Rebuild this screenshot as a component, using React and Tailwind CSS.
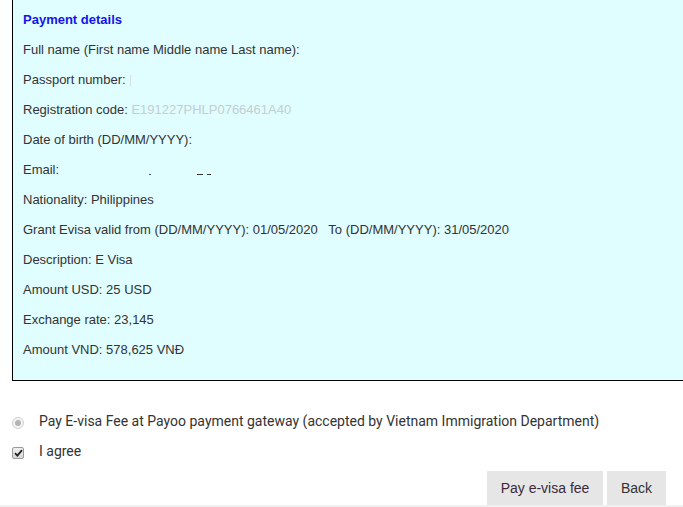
import React from "react";

const rows = [
  "Full name (First name Middle name Last name):",
  "passport",
  "registration",
  "Date of birth (DD/MM/YYYY):",
  "email",
  "Nationality: Philippines",
  "Grant Evisa valid from (DD/MM/YYYY): 01/05/2020   To (DD/MM/YYYY): 31/05/2020",
  "Description: E Visa",
  "Amount USD: 25 USD",
  "Exchange rate: 23,145",
  "Amount VND: 578,625 VNĐ",
];

function Row({ text }) {
  if (text === "passport") {
    return (
      <div className="flex items-center">
        Passport number:
        <span className="ml-[4px] inline-block h-[11px] w-[1px] bg-[#d4e2e3]" />
      </div>
    );
  }
  if (text === "registration") {
    return (
      <div>
        Registration code:{" "}
        <span className="text-[#c4cfd0]">E191227PHLP0766461A40</span>
      </div>
    );
  }
  if (text === "email") {
    return (
      <div className="relative">
        Email:
        <span className="absolute left-[126px] top-[19px] h-[1px] w-[2px] bg-[#3a5a8a]" />
        <span className="absolute left-[174px] top-[19px] h-[1px] w-[6px] bg-[#333]" />
        <span className="absolute left-[184px] top-[19px] h-[1px] w-[4px] bg-[#333]" />
      </div>
    );
  }
  return <div className="whitespace-pre">{text}</div>;
}

export default function App() {
  return (
    <div className="w-[683px] h-[507px] overflow-hidden bg-white font-['Liberation_Sans',Arial,sans-serif]">
      <div className="ml-[12px] border-l border-b border-black bg-[#e0fdff] pt-[5px] pb-[15px] pl-[10px] text-[13px] leading-[30px] text-[#333]">
        <div className="font-bold text-[#1414e6]">Payment details</div>
        {rows.map((r, i) => (
          <Row key={i} text={r} />
        ))}
      </div>

      <div className="mt-[25px] font-['Roboto',sans-serif] text-[14px] text-[#333]">
        <div className="flex h-[30px] items-center">
          <span className="ml-[12px] mt-[4px] flex h-[12px] w-[12px] items-center justify-center rounded-full border border-[#d0d0d0] bg-[#f4f4f4]">
            <span className="h-[6px] w-[6px] rounded-full bg-[#b4b4b4]" />
          </span>
          <span className="ml-[15px]">
            Pay E-visa Fee at Payoo payment gateway (accepted by Vietnam Immigration Department)
          </span>
        </div>
        <div className="flex h-[30px] items-center">
          <span className="ml-[12px] mt-[4px] flex h-[12px] w-[12px] items-center justify-center rounded-[2px] border border-[#9a9a9a] bg-gradient-to-b from-[#f0f0f0] to-[#d8d8d8]">
            <svg width="9" height="8" viewBox="0 0 9 8">
              <path d="M1 4.2 L3.4 6.6 L8 1.2" fill="none" stroke="#222" strokeWidth="1.8" />
            </svg>
          </span>
          <span className="ml-[15px]">I agree</span>
        </div>
      </div>

      <div className="mt-[5px] mr-[17px] flex justify-end gap-[4px] text-[14px] text-[#333]">
        <button className="h-[34px] w-[116px] bg-[#e6e6e6] text-[#3a2a3a]">Pay e-visa fee</button>
        <button className="h-[34px] w-[59px] bg-[#e6e6e6] text-[#333]">Back</button>
      </div>
      <div className="h-[4px] bg-[#f0f0f0]" />
    </div>
  );
}
